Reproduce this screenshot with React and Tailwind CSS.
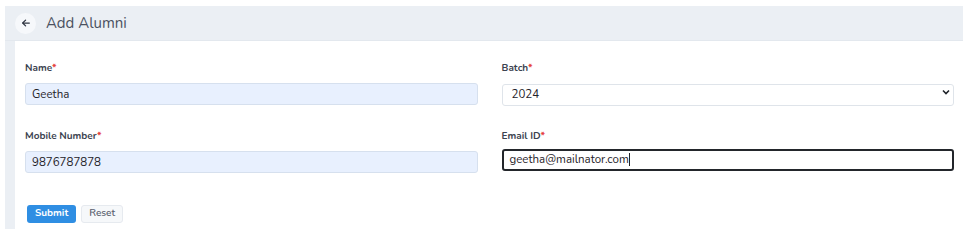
import React from 'react';

const Label = ({ children }) => (
  <label className="block text-[10px] font-bold text-[#3c4350] leading-[18px] mb-[4px]">
    {children}
    <span className="text-[#e53e3e]">*</span>
  </label>
);

const AddAlumni = () => {
  return (
    <div className="min-h-screen bg-white pt-[6px] pl-[5px] pr-[13px] font-['Nunito','Lato',sans-serif]">
      {/* Header */}
      <div className="h-[35px] bg-[#ebeff4] flex items-center pl-[10px] border-b border-[#e3e8ee]">
        <button className="w-[21px] h-[21px] rounded-full bg-[#f6f8fb] flex items-center justify-center text-[#2d3340]">
          <svg width="10" height="10" viewBox="0 0 24 24" fill="none" stroke="currentColor" strokeWidth="3" strokeLinecap="round" strokeLinejoin="round">
            <path d="M20 12H5" />
            <path d="M11 5l-7 7 7 7" />
          </svg>
        </button>
        <h1 className="ml-[10px] text-[15px] text-[#4a5160] leading-none">Add Alumni</h1>
      </div>

      {/* Body */}
      <div className="flex">
        <div className="w-[10px] bg-[#ebeff4]"></div>
        <div className="flex-1 bg-white pl-[9px] pr-[9px] pt-[18px] pb-[6px]">
          <div className="grid grid-cols-2 gap-x-[24px] gap-y-[21px] pl-[1px]">
            <div>
              <Label>Name</Label>
              <input
                readOnly
                value="Geetha"
                className="w-full h-[22px] rounded-[3px] border border-[#d6e0ee] bg-[#e8f0fe] px-[6px] text-[11.5px] text-[#1f2329] outline-none"
              />
            </div>
            <div>
              <Label>Batch</Label>
              <div className="relative">
                <select
                  defaultValue="2024"
                  className="appearance-none w-full h-[22px] rounded-[3px] border border-[#dfe4ea] bg-white px-[9px] text-[11.5px] text-[#1f2329] outline-none"
                >
                  <option>2023</option>
                  <option>2024</option>
                  <option>2025</option>
                </select>
                <svg className="absolute right-[4px] top-[8px] pointer-events-none" width="8" height="6" viewBox="0 0 8 6" fill="none" stroke="#1f2329" strokeWidth="1.6">
                  <path d="M1 1.5l3 3 3-3" />
                </svg>
              </div>
            </div>
            <div>
              <Label>Mobile Number</Label>
              <input
                readOnly
                value="9876787878"
                className="w-full h-[22px] rounded-[3px] border border-[#d6e0ee] bg-[#e8f0fe] px-[6px] text-[11.5px] text-[#1f2329] outline-none"
              />
            </div>
            <div>
              <Label>Email ID</Label>
              <div className="w-full h-[22px] rounded-[3px] border-2 border-[#23262b] bg-white px-[6px] flex items-center text-[11.5px] text-[#1f2329]">
                geetha@mailnator.com
                <span className="inline-block w-px h-[13px] bg-[#1f2329]"></span>
              </div>
            </div>
          </div>

          <div className="flex gap-[5px] mt-[32px] pl-[3px]">
            <button className="h-[18px] px-[8px] rounded-[3px] bg-[#2f8ee3] text-white text-[10px] font-bold">
              Submit
            </button>
            <button className="h-[18px] px-[7px] rounded-[3px] bg-[#f6f8fa] border border-[#e6eaef] text-[#5b6270] text-[10px] font-semibold">
              Reset
            </button>
          </div>
        </div>
      </div>
    </div>
  );
};

export default AddAlumni;
